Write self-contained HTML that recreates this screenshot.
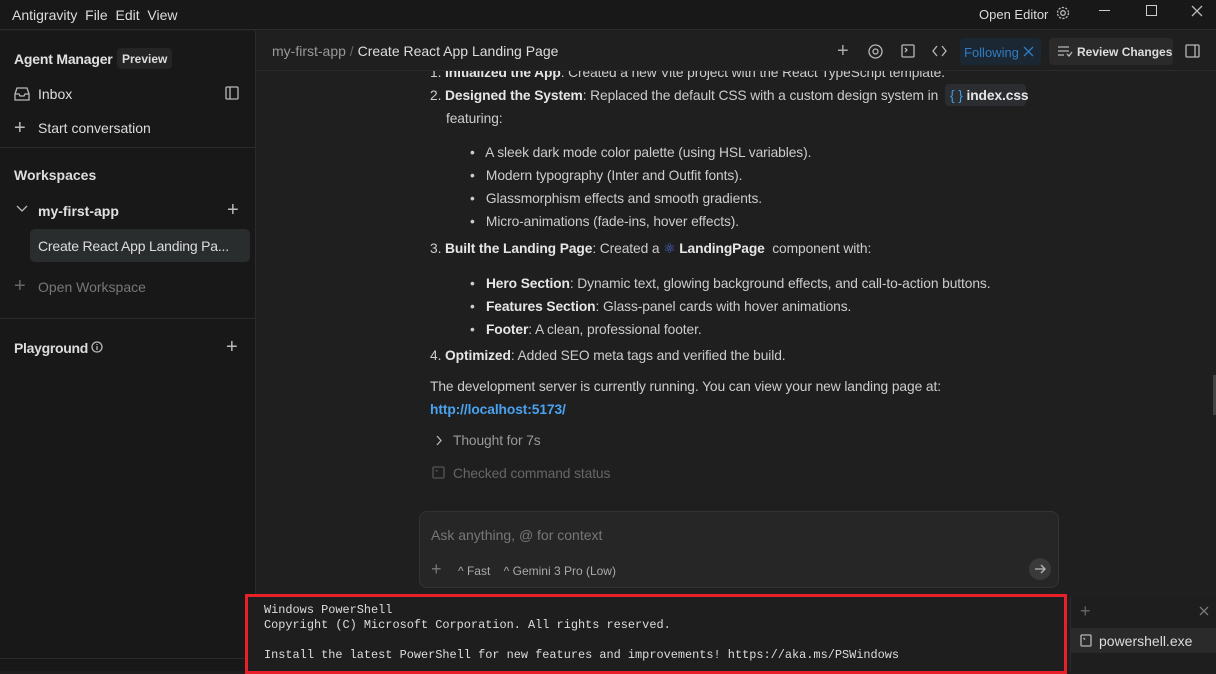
<!DOCTYPE html>
<html><head><meta charset="utf-8"><style>
*{box-sizing:border-box;margin:0;padding:0}
body{width:1216px;height:671px;overflow:hidden;background:#1f1f1f;font-family:"Liberation Sans",sans-serif;color:#cccccc;font-size:14px;position:relative}
.a{position:absolute;white-space:nowrap}
svg{position:absolute;fill:none;stroke:#b8b8b8;stroke-width:1.3}
b{color:#e6e6e6}
.c{font-size:13.8px;letter-spacing:-0.1px}
</style></head><body>
<div class="a" style="left:0;top:0;width:1216px;height:30px;background:#181818;border-bottom:1px solid #2b2b2b"></div>
<div class="a" style="left:12px;top:7px;font-size:14px;color:#dcdcdc">Antigravity&nbsp; File&nbsp; Edit&nbsp; View</div>
<div class="a" style="left:979px;top:7px;font-size:13px;color:#dcdcdc">Open Editor</div>
<svg style="left:1055px;top:5px" width="16" height="16" viewBox="0 0 16 16"><circle cx="8" cy="8" r="2.3"/><circle cx="8" cy="8" r="5.5" stroke-dasharray="2.2 1.3"/></svg>
<div class="a" style="left:1099px;top:10px;width:11px;height:1px;background:#ccc"></div>
<div class="a" style="left:1146px;top:5px;width:11px;height:11px;border:1px solid #ccc"></div>
<svg style="left:1191px;top:5px" width="12" height="12"><path d="M1 1L11 11M11 1L1 11"/></svg>
<div class="a" style="left:0;top:31px;width:256px;height:640px;background:#181818;border-right:1px solid #2b2b2b"></div>
<div class="a" style="left:14px;top:51px;font-weight:bold;color:#e0e0e0;letter-spacing:-0.2px">Agent Manager</div>
<div class="a" style="left:117px;top:48px;height:21px;padding:4px 5px;background:#252526;border-radius:4px;font-size:12px;font-weight:bold;color:#ddd">Preview</div>
<svg style="left:14px;top:87px" width="16" height="14"><path d="M1 7L3 1H13L15 7V13H1ZM1 7H5L6 9H10L11 7H15"/></svg>
<div class="a" style="left:38px;top:86px;color:#ddd">Inbox</div>
<svg style="left:225px;top:86px" width="14" height="14"><rect x="1" y="1" width="12" height="12" rx="1"/><path d="M5 1V13"/></svg>
<div class="a" style="left:14px;top:117px;font-size:20px;color:#bbb">+</div>
<div class="a" style="left:38px;top:120px;color:#ddd">Start conversation</div>
<div class="a" style="left:0;top:147px;width:255px;height:1px;background:#2b2b2b"></div>
<div class="a" style="left:14px;top:167px;font-weight:bold;color:#ddd">Workspaces</div>
<svg style="left:16px;top:205px" width="12" height="8"><path d="M1 1L6 6L11 1"/></svg>
<div class="a" style="left:38px;top:203px;font-weight:bold;color:#e0e0e0">my-first-app</div>
<div class="a" style="left:227px;top:199px;font-size:20px;color:#bbb">+</div>
<div class="a" style="left:30px;top:229px;width:220px;height:33px;background:#2a2d2e;border-radius:5px"></div>
<div class="a" style="left:38px;top:238px;color:#ddd;letter-spacing:-0.2px">Create React App Landing Pa...</div>
<div class="a" style="left:14px;top:275px;font-size:20px;color:#666">+</div>
<div class="a" style="left:38px;top:279px;color:#777">Open Workspace</div>
<div class="a" style="left:0;top:318px;width:255px;height:1px;background:#2b2b2b"></div>
<div class="a" style="left:14px;top:340px;font-weight:bold;color:#ddd;letter-spacing:-0.3px">Playground</div>
<svg style="left:91px;top:341px" width="12" height="12" stroke-width="1"><circle cx="6" cy="6" r="5"/><path d="M6 5V9M6 3V4"/></svg>
<div class="a" style="left:226px;top:336px;font-size:20px;color:#bbb">+</div>
<div class="a" style="left:0;top:658px;width:255px;height:1px;background:#2b2b2b"></div>
<div class="a" style="left:257px;top:70px;width:959px;height:1px;background:#2b2b2b"></div>
<div class="a" style="left:272px;top:43px;color:#999">my-first-app <span style="color:#666">/</span> <span style="color:#ddd">Create React App Landing Page</span></div>
<div class="a" style="left:837px;top:40px;font-size:20px;color:#aaa">+</div>
<svg style="left:868px;top:44px" width="15" height="15"><circle cx="7.5" cy="7.5" r="6.5"/><circle cx="7.5" cy="7.5" r="2.5"/></svg>
<svg style="left:901px;top:44px" width="14" height="14"><rect x="1" y="1" width="12" height="12" rx="1"/><path d="M4 4L6 6L4 8"/></svg>
<svg style="left:932px;top:45px" width="15" height="12"><path d="M5 1L1 6L5 11M10 1L14 6L10 11"/></svg>
<div class="a" style="left:960px;top:38px;width:81px;height:27px;background:#1b2733;border-radius:4px"></div>
<div class="a" style="left:964px;top:45px;font-size:13px;color:#2f7dc0">Following</div>
<svg style="left:1023px;top:46px;stroke:#2f7dc0" width="11" height="11"><path d="M1 1L10 10M10 1L1 10"/></svg>
<div class="a" style="left:1049px;top:38px;width:124px;height:27px;background:#2a2a2a;border-radius:4px"></div>
<svg style="left:1057px;top:45px" width="16" height="12"><path d="M1 2H12M1 6H12M1 10H7M10 9L12 11L15 7"/></svg>
<div class="a" style="left:1077px;top:45px;font-size:12px;font-weight:bold;color:#ddd">Review Changes</div>
<svg style="left:1185px;top:44px" width="15" height="14"><rect x="1" y="1" width="13" height="12" rx="1"/><path d="M10 1V13"/></svg>
<div class="a" style="left:1213px;top:375px;width:3px;height:40px;background:#444"></div>
<div class="c">
<div class="a" style="left:257px;top:71px;width:959px;height:10px;overflow:hidden"><div class="a" style="left:173px;top:-6px"><span>1. </span><b>Initialized the App</b>: Created a new Vite project with the React TypeScript template.</div></div>
<div class="a" style="left:430px;top:88px">2. <b>Designed the System</b>: Replaced the default CSS with a custom design system in</div>
<div class="a" style="left:945px;top:84px;width:81px;height:22px;background:#2b2d30;border-radius:4px"></div>
<div class="a" style="left:950px;top:88px"><span style="color:#3a9fe0">{ }</span> <b>index.css</b></div>
<div class="a" style="left:446px;top:111px">featuring:</div>
<div class="a" style="left:470px;top:141px;line-height:23px">• &nbsp; A sleek dark mode color palette (using HSL variables).<br>• &nbsp; Modern typography (Inter and Outfit fonts).<br>• &nbsp; Glassmorphism effects and smooth gradients.<br>• &nbsp; Micro-animations (fade-ins, hover effects).</div>
<div class="a" style="left:430px;top:241px">3. <b>Built the Landing Page</b>: Created a <span style="color:#4a6ee0">⚛</span> <b>LandingPage</b>&nbsp; component with:</div>
<div class="a" style="left:470px;top:272px;line-height:23px">• &nbsp; <b>Hero Section</b>: Dynamic text, glowing background effects, and call-to-action buttons.<br>• &nbsp; <b>Features Section</b>: Glass-panel cards with hover animations.<br>• &nbsp; <b>Footer</b>: A clean, professional footer.</div>
<div class="a" style="left:430px;top:348px">4. <b>Optimized</b>: Added SEO meta tags and verified the build.</div>
<div class="a" style="left:430px;top:379px">The development server is currently running. You can view your new landing page at:</div>
<div class="a" style="left:430px;top:402px;color:#4aa3f0;font-weight:bold">http://localhost:5173/</div>
<svg style="left:435px;top:435px" width="8" height="11"><path d="M2 1L6 5.5L2 10"/></svg>
<div class="a" style="left:453px;top:433px;color:#999">Thought for 7s</div>
<svg style="left:432px;top:466px;stroke:#555" width="13" height="13"><rect x="1" y="1" width="11" height="11" rx="1"/><path d="M3.5 4L5.5 5.5"/></svg>
<div class="a" style="left:453px;top:466px;color:#666">Checked command status</div>
</div>
<div class="a" style="left:419px;top:511px;width:640px;height:77px;background:#262626;border:1px solid #333;border-radius:8px"></div>
<div class="a" style="left:431px;top:527px;color:#777">Ask anything, @ for context</div>
<div class="a" style="left:431px;top:559px;font-size:18px;color:#777">+</div>
<div class="a" style="left:458px;top:564px;font-size:12px;color:#aaa">^ Fast &nbsp;&nbsp; ^ Gemini 3 Pro (Low)</div>
<div class="a" style="left:1029px;top:558px;width:22px;height:22px;border-radius:50%;background:#3a3a3a"></div>
<svg style="left:1034px;top:564px" width="12" height="10"><path d="M1 5H11M7 1L11 5L7 9"/></svg>
<div class="a" style="left:245px;top:594px;width:822px;height:80px;background:#1e1e1e;border:3px solid #e8202a"></div>
<div class="a" style="left:264px;top:603px;font-family:'Liberation Mono',monospace;font-size:11.9px;line-height:15px;color:#ddd;white-space:pre">Windows PowerShell
Copyright (C) Microsoft Corporation. All rights reserved.

Install the latest PowerShell for new features and improvements! https://aka.ms/PSWindows</div>
<div class="a" style="left:1070px;top:597px;width:146px;height:74px;background:#1e1e1e;border-left:1px solid #2b2b2b"></div>
<div class="a" style="left:1080px;top:601px;font-size:18px;color:#666">+</div>
<svg style="left:1199px;top:606px;stroke:#777" width="10" height="10"><path d="M1 1L9 9M9 1L1 9"/></svg>
<div class="a" style="left:1071px;top:628px;width:145px;height:25px;background:#2a2a2a"></div>
<svg style="left:1080px;top:634px" width="12" height="13"><rect x="1" y="1" width="10" height="11" rx="1"/><path d="M3.5 4L5 5.5"/></svg>
<div class="a" style="left:1099px;top:633px;color:#ddd">powershell.exe</div>
</body></html>
